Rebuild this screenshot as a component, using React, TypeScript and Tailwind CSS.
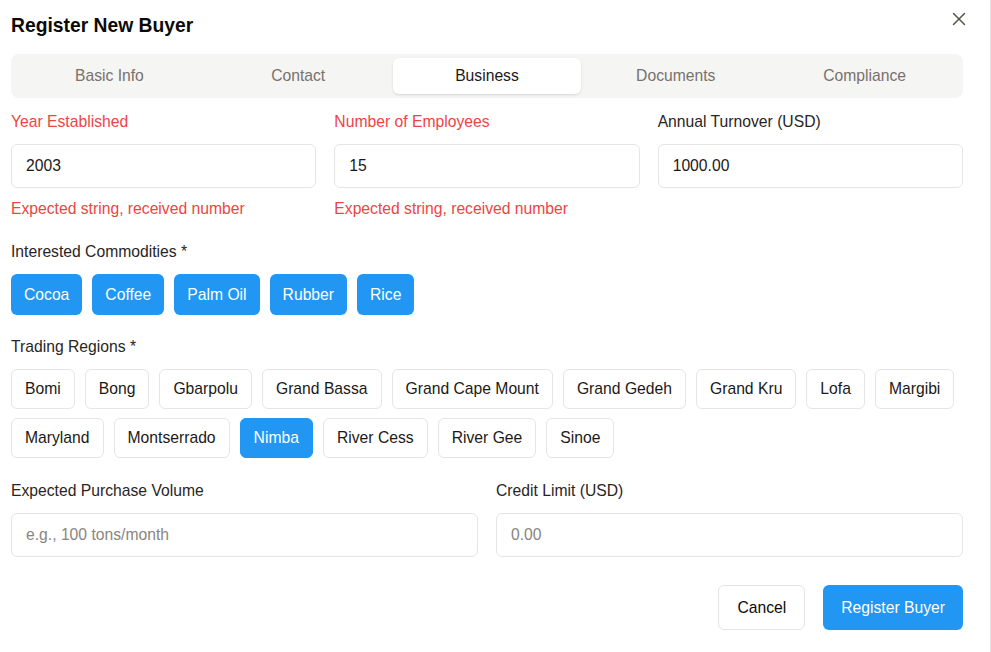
import { X } from "lucide-react";

const tabs = ["Basic Info", "Contact", "Business", "Documents", "Compliance"];
const commodities = ["Cocoa", "Coffee", "Palm Oil", "Rubber", "Rice"];
const regions = [
  "Bomi",
  "Bong",
  "Gbarpolu",
  "Grand Bassa",
  "Grand Cape Mount",
  "Grand Gedeh",
  "Grand Kru",
  "Lofa",
  "Margibi",
  "Maryland",
  "Montserrado",
  "Nimba",
  "River Cess",
  "River Gee",
  "Sinoe",
];
const selectedRegions = ["Nimba"];

const Field = ({
  label,
  value,
  placeholder,
  error,
}: {
  label: string;
  value?: string;
  placeholder?: string;
  error?: string;
}) => (
  <div>
    <label
      className={`block leading-6 mb-[10px] ${
        error ? "text-[#ef4444]" : "text-[#292524]"
      }`}
    >
      {label}
    </label>
    <input
      readOnly
      value={value ?? ""}
      placeholder={placeholder}
      className="w-full h-11 px-3.5 rounded-md border border-[#e7e5e4] bg-white text-[15.7px] text-[#1c1917] placeholder:text-[#8a8580] outline-none"
    />
    {error && <p className="mt-[9px] leading-6 text-[#ef4444]">{error}</p>}
  </div>
);

export default function App() {
  return (
    <div
      className="relative w-full min-h-[652px] bg-white border-r border-[#e2e2e2] px-[11px] pt-3 pb-6 text-[15.7px]"
      style={{ fontFamily: '"Liberation Sans", Arial, sans-serif' }}
    >
      <button className="absolute right-[20px] top-[8px] text-[#57534e]">
        <X size={22} strokeWidth={1.6} />
      </button>

      <h2 className="text-[19.3px] leading-7 font-bold text-[#0c0a09]">
        Register New Buyer
      </h2>

      <div className="mt-[14px] w-[952px] grid grid-cols-5 p-1 rounded-lg bg-[#f5f5f4]">
        {tabs.map((t) => (
          <div
            key={t}
            className={`h-9 flex items-center justify-center rounded-md ${
              t === "Business"
                ? "bg-white text-[#1c1917] shadow-sm"
                : "text-[#78716c]"
            }`}
          >
            {t}
          </div>
        ))}
      </div>

      <div className="w-[952px]">
        <div className="mt-3 grid grid-cols-3 gap-[18px]">
          <Field
            label="Year Established"
            value="2003"
            error="Expected string, received number"
          />
          <Field
            label="Number of Employees"
            value="15"
            error="Expected string, received number"
          />
          <Field label="Annual Turnover (USD)" value="1000.00" />
        </div>

        <div className="mt-[19px]">
          <p className="leading-6 text-[#292524] mb-[10px]">
            Interested Commodities *
          </p>
          <div className="flex flex-wrap gap-[10px]">
            {commodities.map((c) => (
              <span
                key={c}
                className="h-[41px] px-[13px] flex items-center rounded-md bg-[#2196f3] text-white"
              >
                {c}
              </span>
            ))}
          </div>
        </div>

        <div className="mt-[20px]">
          <p className="leading-6 text-[#292524] mb-[10px]">
            Trading Regions *
          </p>
          <div className="flex flex-wrap gap-x-[10px] gap-y-[9px]">
            {regions.map((r) =>
              selectedRegions.includes(r) ? (
                <span
                  key={r}
                  className="h-10 px-[13px] flex items-center rounded-md border border-[#2196f3] bg-[#2196f3] text-white"
                >
                  {r}
                </span>
              ) : (
                <span
                  key={r}
                  className="h-10 px-[13px] flex items-center rounded-md border border-[#e7e5e4] bg-white text-[#1c1917]"
                >
                  {r}
                </span>
              )
            )}
          </div>
        </div>

        <div className="mt-[21px] grid grid-cols-2 gap-[18px]">
          <Field
            label="Expected Purchase Volume"
            placeholder="e.g., 100 tons/month"
          />
          <Field label="Credit Limit (USD)" placeholder="0.00" />
        </div>

        <div className="mt-[28px] flex justify-end gap-[18px]">
          <button className="h-[45px] px-[18px] rounded-md border border-[#e7e5e4] bg-white text-[#0c0a09]">
            Cancel
          </button>
          <button className="h-[45px] px-[18px] rounded-md bg-[#2196f3] text-white">
            Register Buyer
          </button>
        </div>
      </div>
    </div>
  );
}
